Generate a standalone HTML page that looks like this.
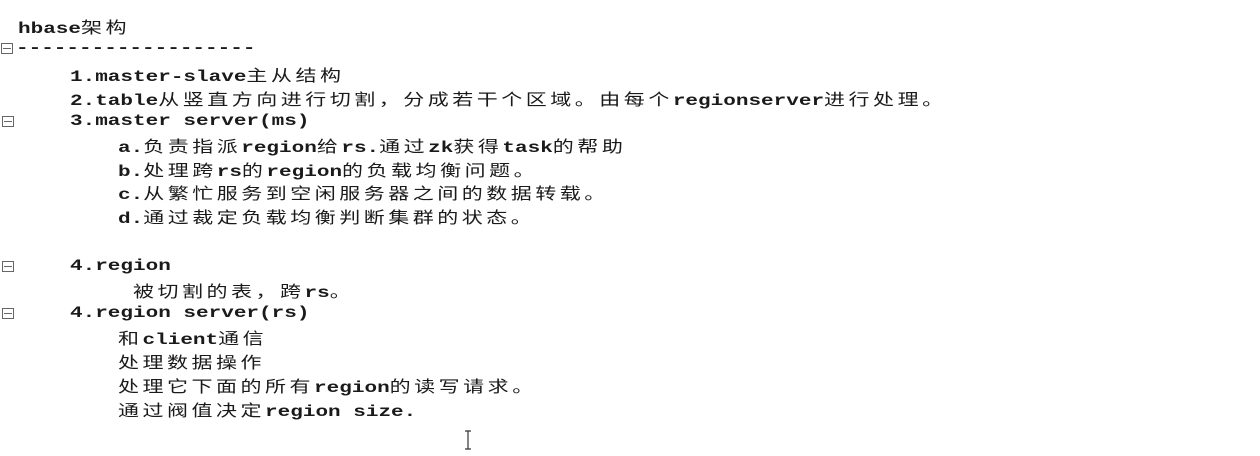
<!DOCTYPE html>
<html><head><meta charset="utf-8"><style>
body{margin:0;width:1260px;height:456px;background:#fff;overflow:hidden;position:relative;}
.l{position:absolute;white-space:pre;font-family:"Liberation Mono","Noto Sans CJK SC",monospace;font-size:16px;line-height:20px;color:#1a1a1a;font-weight:bold;transform:scaleX(1.3125);transform-origin:0 50%;}
.c{font-family:"Noto Sans CJK SC",sans-serif;font-weight:normal;letter-spacing:2.67px;}
.b{position:absolute;width:12px;height:11px;border:1px solid #666;box-sizing:border-box;}
.b:after{content:"";position:absolute;left:1px;right:1px;top:4px;height:1px;background:#666;}
.cur{position:absolute;left:463px;top:430px;width:10px;height:20px;}
</style></head><body>
<div class="l" style="left:18px;top:16px">hbase<span class="c">架构</span></div>
<div class="b" style="left:1px;top:43px"></div>
<div class="l" style="left:16px;top:38px">-------------------</div>
<div class="l" style="left:70px;top:64px">1.master-slave<span class="c">主从结构</span></div>
<div class="l" style="left:70px;top:88px">2.table<span class="c">从竖直方向进行切割，分成若干个区域。由每个</span>regionserver<span class="c">进行处理。</span></div>
<div class="b" style="left:2px;top:116px"></div>
<div class="l" style="left:70px;top:111px">3.master server(ms)</div>
<div class="l" style="left:118px;top:135px">a.<span class="c">负责指派</span>region<span class="c">给</span>rs.<span class="c">通过</span>zk<span class="c">获得</span>task<span class="c">的帮助</span></div>
<div class="l" style="left:118px;top:159px">b.<span class="c">处理跨</span>rs<span class="c">的</span>region<span class="c">的负载均衡问题。</span></div>
<div class="l" style="left:118px;top:182px">c.<span class="c">从繁忙服务到空闲服务器之间的数据转载。</span></div>
<div class="l" style="left:118px;top:206px">d.<span class="c">通过裁定负载均衡判断集群的状态。</span></div>
<div class="b" style="left:2px;top:261px"></div>
<div class="l" style="left:70px;top:256px">4.region</div>
<div class="l" style="left:133px;top:280px"><span class="c">被切割的表，跨</span>rs<span class="c">。</span></div>
<div class="b" style="left:2px;top:308px"></div>
<div class="l" style="left:70px;top:303px">4.region server(rs)</div>
<div class="l" style="left:118px;top:327px"><span class="c">和</span>client<span class="c">通信</span></div>
<div class="l" style="left:118px;top:351px"><span class="c">处理数据操作</span></div>
<div class="l" style="left:118px;top:375px"><span class="c">处理它下面的所有</span>region<span class="c">的读写请求。</span></div>
<div class="l" style="left:118px;top:399px"><span class="c">通过阀值决定</span>region size.</div>
<svg class="cur" viewBox="0 0 10 20"><path d="M2 1h6M5 1v18M2 19h6" stroke="#333" stroke-width="1.2" fill="none"/></svg>
</body></html>
